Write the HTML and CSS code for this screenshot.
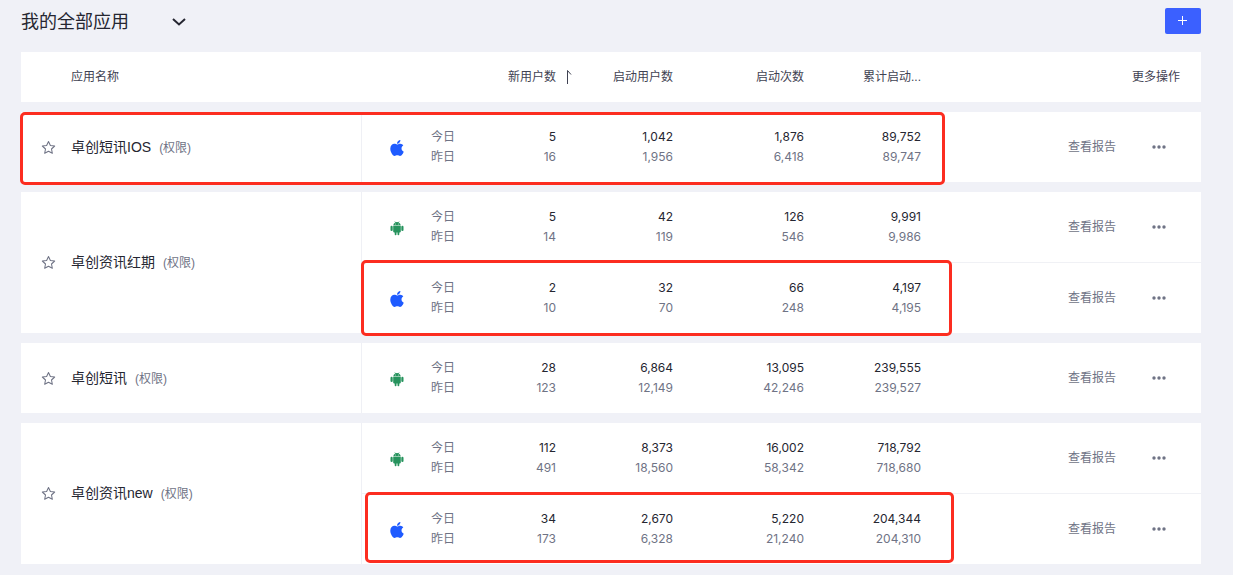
FILE: index.html
```html
<!DOCTYPE html>
<html lang="zh-CN">
<head>
<meta charset="utf-8">
<title>我的全部应用</title>
<link rel="stylesheet" href="styles.css">
</head>
<body>
<svg class="sprite" aria-hidden="true">
  <symbol id="star" viewBox="0 0 16 16"><path d="M8 1.600l2 4.200 4.600.6-3.400 3.200.9 4.600L8 12l-4.100 2.200.9-4.600L1.400 6.400l4.600-.6z" fill="none" stroke="currentColor" stroke-width="1.100" stroke-linejoin="round"/></symbol>
  <symbol id="apple" viewBox="0 32 384 448"><path fill="currentColor" d="M318.7 268.7c-.2-36.7 16.4-64.4 50-84.8-18.8-26.9-47.2-41.7-84.7-44.6-35.5-2.8-74.3 20.7-88.5 20.7-15 0-49.4-19.7-76.4-19.7C63.3 141.2 4 184.8 4 273.5q0 39.3 14.4 81.2c12.800 36.7 59 126.7 107.2 125.2 25.2-.6 43-17.9 75.8-17.9 31.8 0 48.3 17.9 76.4 17.9 48.6-.7 90.4-82.5 102.6-119.3-65.2-30.7-61.7-90-61.7-91.9zm-56.6-164.2c27.3-32.4 24.8-61.9 24-72.5-24.1 1.4-52 16.4-67.9 34.9-17.5 19.8-27.8 44.3-25.6 71.9 26.1 2 49.9-11.4 69.500-34.3z"/></symbol>
  <symbol id="android" viewBox="0 0 14 16"><g fill="currentColor"><path d="M3.200 5.400a3.800 3.700 0 0 1 2-2.900L4.500 1.400l.4-.2.7 1.100a4.500 4.500 0 0 1 2.800 0l.7-1.100.4.2-.7 1.100a3.800 3.700 0 0 1 2 2.900z"/><path d="M3.200 5.900h7.600v5.700a.8.8 0 0 1-.8.8H9.300v1.900a.9.9 0 0 1-1.800 0v-1.900h-1v1.900a.9.9 0 0 1-1.800 0v-1.900H4a.8.8 0 0 1-.8-.8z"/><rect x=".5" y="5.800" width="2.200" height="5.200" rx="1.100"/><rect x="11.300" y="5.800" width="2.200" height="5.200" rx="1.100"/></g><circle cx="5.400" cy="4" r=".45" fill="#fff"/><circle cx="8.600" cy="4" r=".45" fill="#fff"/></symbol>
  <symbol id="dots" viewBox="0 0 14 4"><g fill="currentColor"><circle cx="2" cy="2" r="1.700"/><circle cx="7" cy="2" r="1.700"/><circle cx="12" cy="2" r="1.700"/></g></symbol>
</svg>

<header class="topbar">
  <div class="picker">
    <select class="picker-select" aria-label="应用分组"><option>我的全部应用</option></select>
    <svg class="picker-arrow" viewBox="0 0 14 8" aria-hidden="true"><path d="M1 1l6 5.500L13 1" fill="none" stroke="currentColor" stroke-width="2"/></svg>
  </div>
  <button class="add" type="button" aria-label="添加应用"><svg class="add-icon" viewBox="0 0 10 10" aria-hidden="true"><path d="M4.500 0v9M0 4.500h9" stroke="currentColor" stroke-width="1"/></svg></button>
</header>

<main class="board">
  <table class="apps">
    <colgroup>
      <col class="c-star"><col class="c-name"><col class="c-os"><col class="c-day"><col class="c-new"><col class="c-active"><col class="c-launch"><col class="c-total"><col class="c-report"><col class="c-more">
    </colgroup>
    <thead>
      <tr>
        <th></th>
        <th class="left" scope="col">应用名称</th>
        <th></th>
        <th></th>
        <th scope="col"><button class="sort" type="button">新用户数<svg class="sort-icon" viewBox="0 0 8 16" aria-hidden="true"><path d="M3.500 15V1.500L7 5.500" fill="none" stroke="currentColor"/></svg></button></th>
        <th scope="col">启动用户数</th>
        <th scope="col">启动次数</th>
        <th scope="col">累计启动...</th>
        <th class="head-more" colspan="2" scope="col">更多操作</th>
      </tr>
    </thead>
    <tbody>
      <tr>
        <td class="star"><button class="icon-btn" type="button" aria-label="收藏"><svg class="i-star"><use href="#star"/></svg></button></td>
        <td class="name">卓创短讯IOS<span class="perm">(权限)</span></td>
        <td class="os"><svg class="i-apple" role="img" aria-label="iOS"><use href="#apple"/></svg></td>
        <td class="day"><div>今日</div><div>昨日</div></td>
        <td class="num new"><div class="now">5</div><div>16</div></td>
        <td class="num"><div class="now">1,042</div><div>1,956</div></td>
        <td class="num"><div class="now">1,876</div><div>6,418</div></td>
        <td class="num"><div class="now">89,752</div><div>89,747</div></td>
        <td class="report"><a href="#">查看报告</a></td>
        <td class="more"><button class="icon-btn" type="button" aria-label="更多"><svg class="i-dots"><use href="#dots"/></svg></button></td>
      </tr>
    </tbody>
    <tbody>
      <tr>
        <td class="star" rowspan="2"><button class="icon-btn" type="button" aria-label="收藏"><svg class="i-star"><use href="#star"/></svg></button></td>
        <td class="name" rowspan="2">卓创资讯红期<span class="perm">(权限)</span></td>
        <td class="os"><svg class="i-android" role="img" aria-label="Android"><use href="#android"/></svg></td>
        <td class="day"><div>今日</div><div>昨日</div></td>
        <td class="num new"><div class="now">5</div><div>14</div></td>
        <td class="num"><div class="now">42</div><div>119</div></td>
        <td class="num"><div class="now">126</div><div>546</div></td>
        <td class="num"><div class="now">9,991</div><div>9,986</div></td>
        <td class="report"><a href="#">查看报告</a></td>
        <td class="more"><button class="icon-btn" type="button" aria-label="更多"><svg class="i-dots"><use href="#dots"/></svg></button></td>
      </tr>
      <tr class="second">
        <td class="os"><svg class="i-apple" role="img" aria-label="iOS"><use href="#apple"/></svg></td>
        <td class="day"><div>今日</div><div>昨日</div></td>
        <td class="num new"><div class="now">2</div><div>10</div></td>
        <td class="num"><div class="now">32</div><div>70</div></td>
        <td class="num"><div class="now">66</div><div>248</div></td>
        <td class="num"><div class="now">4,197</div><div>4,195</div></td>
        <td class="report"><a href="#">查看报告</a></td>
        <td class="more"><button class="icon-btn" type="button" aria-label="更多"><svg class="i-dots"><use href="#dots"/></svg></button></td>
      </tr>
    </tbody>
    <tbody>
      <tr>
        <td class="star"><button class="icon-btn" type="button" aria-label="收藏"><svg class="i-star"><use href="#star"/></svg></button></td>
        <td class="name">卓创短讯<span class="perm">(权限)</span></td>
        <td class="os"><svg class="i-android" role="img" aria-label="Android"><use href="#android"/></svg></td>
        <td class="day"><div>今日</div><div>昨日</div></td>
        <td class="num new"><div class="now">28</div><div>123</div></td>
        <td class="num"><div class="now">6,864</div><div>12,149</div></td>
        <td class="num"><div class="now">13,095</div><div>42,246</div></td>
        <td class="num"><div class="now">239,555</div><div>239,527</div></td>
        <td class="report"><a href="#">查看报告</a></td>
        <td class="more"><button class="icon-btn" type="button" aria-label="更多"><svg class="i-dots"><use href="#dots"/></svg></button></td>
      </tr>
    </tbody>
    <tbody>
      <tr>
        <td class="star" rowspan="2"><button class="icon-btn" type="button" aria-label="收藏"><svg class="i-star"><use href="#star"/></svg></button></td>
        <td class="name" rowspan="2">卓创资讯new<span class="perm">(权限)</span></td>
        <td class="os"><svg class="i-android" role="img" aria-label="Android"><use href="#android"/></svg></td>
        <td class="day"><div>今日</div><div>昨日</div></td>
        <td class="num new"><div class="now">112</div><div>491</div></td>
        <td class="num"><div class="now">8,373</div><div>18,560</div></td>
        <td class="num"><div class="now">16,002</div><div>58,342</div></td>
        <td class="num"><div class="now">718,792</div><div>718,680</div></td>
        <td class="report"><a href="#">查看报告</a></td>
        <td class="more"><button class="icon-btn" type="button" aria-label="更多"><svg class="i-dots"><use href="#dots"/></svg></button></td>
      </tr>
      <tr class="second">
        <td class="os"><svg class="i-apple" role="img" aria-label="iOS"><use href="#apple"/></svg></td>
        <td class="day"><div>今日</div><div>昨日</div></td>
        <td class="num new"><div class="now">34</div><div>173</div></td>
        <td class="num"><div class="now">2,670</div><div>6,328</div></td>
        <td class="num"><div class="now">5,220</div><div>21,240</div></td>
        <td class="num"><div class="now">204,344</div><div>204,310</div></td>
        <td class="report"><a href="#">查看报告</a></td>
        <td class="more"><button class="icon-btn" type="button" aria-label="更多"><svg class="i-dots"><use href="#dots"/></svg></button></td>
      </tr>
    </tbody>
  </table>
  <div class="mark mark-first"></div>
  <div class="mark mark-second"></div>
  <div class="mark mark-third"></div>
</main>
</body>
</html>
```
FILE: styles.css
```css
* { box-sizing: border-box; }

body {
  margin: 0;
  padding: 8px 32px 11px 21px;
  background: #f0f1f7;
  color: #252631;
  font: 12px/20px "Liberation Sans", "Noto Sans CJK SC", sans-serif;
}

button, select { font: inherit; color: inherit; border: 0; background: none; padding: 0; margin: 0; cursor: pointer; }
svg { display: block; }
.sprite { position: absolute; width: 0; height: 0; }

.topbar { display: flex; justify-content: space-between; align-items: center; margin-bottom: 18px; }

.picker { display: grid; width: 166px; align-items: center; }
.picker-select { grid-area: 1 / 1; appearance: none; font-size: 18px; line-height: 24px; height: 26px; padding-top: 2px; }
.picker-arrow { grid-area: 1 / 1; justify-self: end; width: 14px; height: 8px; margin: 2px 1px 0 0; pointer-events: none; }

.add { display: flex; align-items: center; justify-content: center; width: 36px; height: 26px; border-radius: 2px; background: #3b60ff; color: #fff; }
.add-icon { width: 10px; height: 10px; }

.board { position: relative; }

.apps { width: 100%; table-layout: fixed; border-spacing: 0; color: #6f7385; }
.apps tbody::before { content: ""; display: block; height: 10px; }
.c-star { width: 50px; }
.c-name { width: 290px; }
.c-os { width: 70px; }
.c-day { width: 60px; }
.c-new { width: 81px; }
.c-active { width: 101px; }
.c-launch { width: 131px; }
.c-total { width: 117px; }
.c-more { width: 84px; }

th { height: 50px; padding: 0; background: #fff; color: #3f4252; font-weight: 400; text-align: right; white-space: nowrap; }
th.left { text-align: left; }
th.head-more { padding-right: 21px; }
.sort { display: inline-flex; align-items: center; gap: 8px; vertical-align: middle; }
.sort-icon { width: 8px; height: 16px; }

td { padding: 15px 0; background: #fff; white-space: nowrap; }
.second td { border-top: 1px solid #f0f1f5; }
.star { padding: 0 0 0 20px; }
.name { padding: 0; color: #252631; font-size: 14px; }
.perm { margin-left: 8px; color: #6f7385; font-size: 12px; }
.os { padding: 2px 0 0 28px; border-left: 1px solid #eff0f5; }
.num { font-family: Inter, "Liberation Sans", sans-serif; text-align: right; }
.new { padding-right: 16px; }
.now { color: #252631; }
.report { padding: 0 1px 0 0; text-align: right; }
.report a { color: inherit; text-decoration: none; }
.more { padding: 0; }
.icon-btn { display: block; }
.more .icon-btn { margin: 0 auto; }

.i-star { width: 15px; height: 15px; }
.i-apple { width: 14px; height: 16px; color: #1f5bff; }
.i-android { width: 14px; height: 16px; color: #26935d; }
.i-dots { width: 14px; height: 4px; }

/* Highlight frames drawn over the table */
.mark { position: absolute; border: 3px solid #fc2d20; border-radius: 5px; pointer-events: none; }
.mark-first { left: -1px; top: 60px; width: 925px; height: 73px; }
.mark-second { left: 340px; top: 208px; width: 591px; height: 76px; }
.mark-third { left: 344px; top: 440px; width: 589px; height: 71px; }
```
